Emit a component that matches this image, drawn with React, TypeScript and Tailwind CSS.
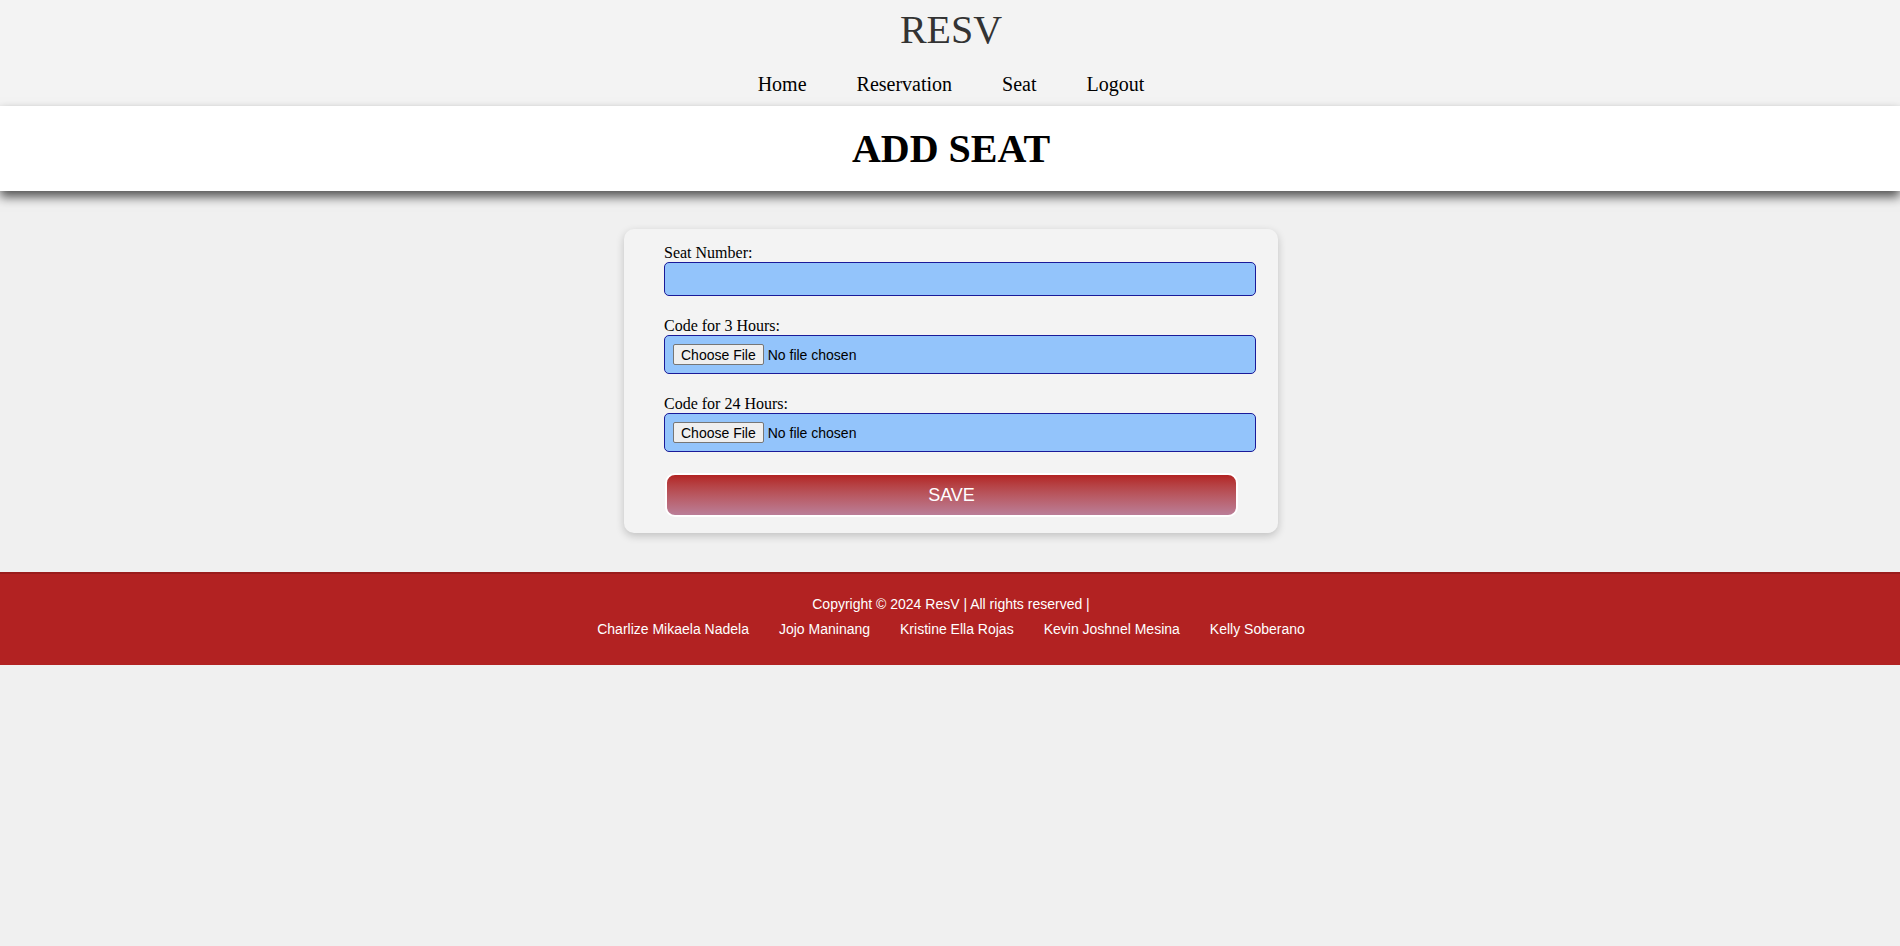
import React from "react";

const navLinks = ["Home", "Reservation", "Seat", "Logout"];
const members = [
  "Charlize Mikaela Nadela",
  "Jojo Maninang",
  "Kristine Ella Rojas",
  "Kevin Joshnel Mesina",
  "Kelly Soberano",
];

function FileField({ label }: { label: string }) {
  return (
    <div className="mt-[21px]">
      <label className="block text-[16px] leading-[18px] text-black">{label}</label>
      <input
        type="file"
        className="block w-[592px] h-[39px] px-[8px] py-[8px] bg-[#93c4fb] border border-[#1a1a99] rounded-[5px] font-['Liberation_Sans',Arial,sans-serif] text-[14px] leading-[21px] text-black file:h-[21px] file:mr-[4px] file:px-[7px] file:bg-[#efefef] file:border file:border-solid file:border-[#767676] file:rounded-[2px] file:text-[14px] file:text-black file:font-['Liberation_Sans',Arial,sans-serif]"
      />
    </div>
  );
}

export default function App() {
  return (
    <div className="min-h-[946px] bg-[#f0f0f0] font-['Liberation_Serif','Times_New_Roman',serif]">
      {/* header */}
      <header className="bg-[#f3f3f3] pt-[7px] pb-[10px] pl-[2px]">
        <h1 className="text-center text-[40px] leading-[46px] font-normal text-[#333]">RESV</h1>
        <nav className="mt-[20px] flex justify-center gap-[50px] text-[20px] leading-[23px] text-black">
          {navLinks.map((link) => (
            <a key={link} href="#" className="text-black">
              {link}
            </a>
          ))}
        </nav>
      </header>

      {/* page title band */}
      <div className="relative z-10 h-[85px] pt-[20px] pl-[2px] bg-white shadow-[0_6px_10px_rgba(0,0,0,0.65)]">
        <h2 className="text-center text-[40px] leading-[46px] font-bold text-black">ADD SEAT</h2>
      </div>

      {/* form card */}
      <main className="pt-[38px] pb-[39px] pl-[2px]">
        <form className="mx-auto w-[654px] bg-[#f3f3f3] rounded-[10px] shadow-[0_3px_8px_rgba(0,0,0,0.2)] pt-[15px] pb-[16px] pl-[40px]">
          <label className="block text-[16px] leading-[18px] text-black">Seat Number:</label>
          <input
            type="text"
            className="block w-[592px] h-[34px] px-[8px] bg-[#93c4fb] border border-[#1a1a99] rounded-[5px] outline-none"
          />
          <FileField label="Code for 3 Hours:" />
          <FileField label="Code for 24 Hours:" />
          <button
            type="button"
            className="mt-[21px] ml-[1px] block w-[573px] h-[44px] rounded-[10px] border-2 border-white bg-gradient-to-b from-[#b22222] to-[#ba7e98] text-white text-[18px] font-['Liberation_Sans',Arial,sans-serif]"
          >
            SAVE
          </button>
        </form>
      </main>

      {/* footer */}
      <footer className="bg-[#b22222] border-t-2 border-[#991c1c] pt-[22px] pb-[28px] pl-[2px] font-['Liberation_Sans',Arial,sans-serif] text-white text-[14px] leading-[16px]">
        <p className="text-center">Copyright © 2024 ResV | All rights reserved |</p>
        <div className="mt-[9px] flex justify-center gap-[30px]">
          {members.map((name) => (
            <span key={name}>{name}</span>
          ))}
        </div>
      </footer>
    </div>
  );
}
